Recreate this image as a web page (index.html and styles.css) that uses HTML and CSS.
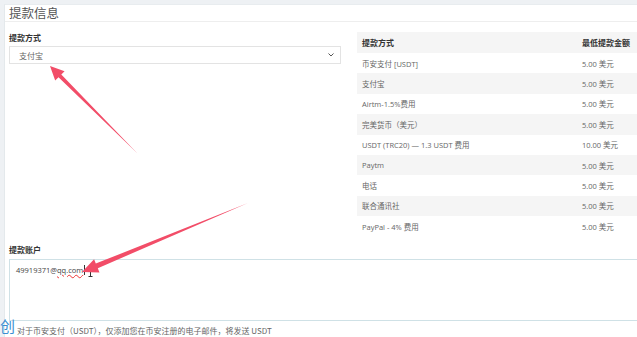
FILE: index.html
```html
<!DOCTYPE html>
<html lang="zh">
<head>
<meta charset="utf-8">
<link rel="stylesheet" href="styles.css">
</head>
<body>
<div class="panel">
  <h2 class="title">提款信息</h2>
  <div class="content">
    <div class="top">
      <div class="left">
        <div class="label">提款方式</div>
        <div class="select">
          <span>支付宝</span>
          <svg class="chev" width="6" height="4" viewBox="0 0 6 4"><path d="M0.5 0.5 L3 3 L5.5 0.5" fill="none" stroke="#555" stroke-width="1"/></svg>
        </div>
      </div>
      <div class="right">
        <div class="trow head"><span class="c1">提款方式</span><span class="c2">最低提款金额</span></div>
        <div class="trow"><span class="c1">币安支付 [USDT]</span><span class="c2">5.00 美元</span></div>
        <div class="trow alt"><span class="c1">支付宝</span><span class="c2">5.00 美元</span></div>
        <div class="trow"><span class="c1">Airtm-1.5%费用</span><span class="c2">5.00 美元</span></div>
        <div class="trow alt"><span class="c1">完美货币（美元）</span><span class="c2">5.00 美元</span></div>
        <div class="trow"><span class="c1">USDT (TRC20) — 1.3 USDT 费用</span><span class="c2">10.00 美元</span></div>
        <div class="trow alt"><span class="c1">Paytm</span><span class="c2">5.00 美元</span></div>
        <div class="trow"><span class="c1">电话</span><span class="c2">5.00 美元</span></div>
        <div class="trow alt"><span class="c1">联合通讯社</span><span class="c2">5.00 美元</span></div>
        <div class="trow"><span class="c1">PayPal - 4% 费用</span><span class="c2">5.00 美元</span></div>
      </div>
    </div>
    <div class="label acct">提款账户</div>
    <div class="textarea">
      <span class="val">49919371@<span class="typo">qq.com</span></span><span class="caret"></span>
      <svg class="ibeam" width="5" height="10" viewBox="0 0 5 10"><path d="M0.5 0.5 H4.5 M2.5 0.5 V9.5 M0.5 9.5 H4.5" fill="none" stroke="#333" stroke-width="1"/></svg>
    </div>
    <div class="note">对于币安支付（USDT），仅添加您在币安注册的电子邮件，将发送 USDT</div>
  </div>
</div>
<div class="mark">创</div>
<svg class="arrows" width="637" height="337" viewBox="0 0 637 337">
  <polygon points="137,153 61.3,74.5 64.6,71.2 50,66 55.2,80.6 58.5,77.3" fill="#f24d68"/>
  <polygon points="248,203 97.8,268.2 99.5,272.6 82,272 94.1,259.2 95.8,263.6" fill="#f24d68"/>
</svg>
</body>
</html>
```
FILE: styles.css
```css
html, body {
  margin: 0;
  padding: 0;
}
body {
  width: 637px;
  height: 337px;
  overflow: hidden;
  background: #eef1f4;
  font-family: "Open Sans", "Noto Sans CJK SC", sans-serif;
  color: #555;
  position: relative;
}
.panel {
  margin: 4px 0 0 4px;
  width: 680px;
  height: 340px;
  background: #fff;
  border-left: 1px solid #e4e9ec;
  border-top: 1px solid #e8ecef;
}
.title {
  margin: 0;
  padding-left: 4px;
  height: 16px;
  line-height: 16px;
  font-size: 12.5px;
  font-weight: normal;
  color: #555;
  font-family: "Noto Sans CJK SC", sans-serif;
  border-bottom: 1px solid #eeeeee;
}
.content {
  padding-left: 4px;
}
.top {
  display: flex;
  gap: 16px;
  padding-top: 10px;
}
.left {
  width: 332px;
  flex: none;
}
.label {
  font-size: 8px;
  line-height: 12px;
  font-weight: bold;
  color: #333;
  font-family: "Noto Sans CJK SC", sans-serif;
}
.select {
  margin-top: 2px;
  height: 18px;
  box-sizing: border-box;
  border: 1px solid #e3e3e3;
  display: flex;
  align-items: center;
  justify-content: space-between;
  padding: 0 6px 0 9px;
  font-size: 8px;
  color: #666;
}
.right {
  flex: 1;
}
.trow {
  display: flex;
  height: 20.4px;
  align-items: center;
  font-size: 7.5px;
  color: #666;
}
.trow.head {
  height: 21px;
  background: #f5f5f5;
  font-weight: bold;
  color: #333;
  font-size: 8px;
}
.trow.alt {
  background: #f5f5f5;
}
.c1 {
  box-sizing: border-box;
  width: 225px;
  padding-left: 5px;
}
.c2 {
  flex: 1;
}
.label.acct {
  margin-top: 7.5px;
}
.textarea {
  margin-top: 3px;
  height: 62px;
  box-sizing: border-box;
  border: 1px solid #cfe1e6;
  padding: 5px 0 0 6px;
  font-size: 7.5px;
  line-height: 10px;
  color: #444;
  display: flex;
  align-items: flex-start;
}
.typo {
  text-decoration: underline wavy #e33;
  text-decoration-thickness: 0.6px;
  text-underline-offset: 1px;
}
.caret {
  width: 1px;
  height: 10px;
  background: #333;
  margin-left: 1px;
}
.ibeam {
  margin: 2px 0 0 3px;
}
.note {
  margin-top: 4px;
  padding-left: 8px;
  font-size: 8px;
  line-height: 12px;
  color: #666;
  font-family: "Noto Sans CJK SC", sans-serif;
}
.mark {
  position: absolute;
  left: 0;
  top: 317px;
  font-size: 15px;
  line-height: 18px;
  color: #3a8fd2;
  font-family: "Noto Sans CJK SC", sans-serif;
}
.arrows {
  position: absolute;
  left: 0;
  top: 0;
  pointer-events: none;
}
```
